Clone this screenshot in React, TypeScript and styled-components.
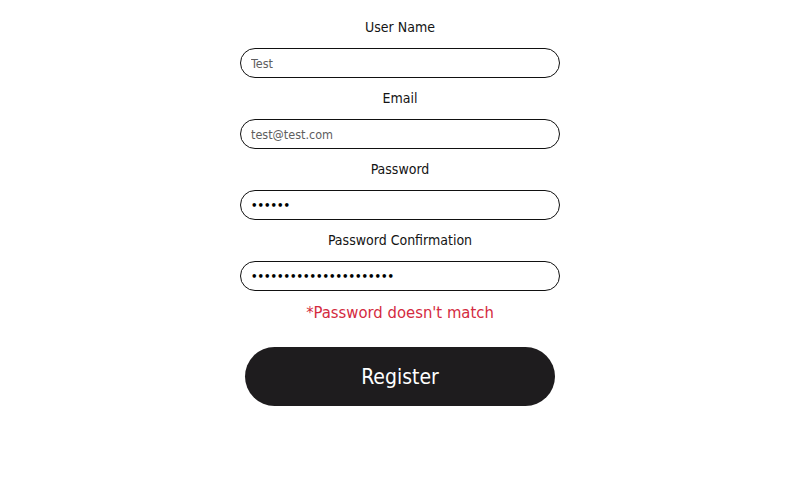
import React from 'react'
import styled, { createGlobalStyle } from 'styled-components'

const GlobalStyle = createGlobalStyle`
  html, body {
    margin: 0;
    padding: 0;
    background: #ffffff;
    font-family: "DejaVu Sans Condensed", "DejaVu Sans", sans-serif;
  }
`

const Page = styled.div`
  width: 100%;
  min-height: 479px;
  display: flex;
  justify-content: center;
  padding: 17px 0 0 4px;
  box-sizing: border-box;
`

const Form = styled.form`
  width: 320px;
  display: flex;
  flex-direction: column;
  align-items: center;
`

const Field = styled.div`
  width: 100%;
  display: flex;
  flex-direction: column;
  align-items: center;
  margin-bottom: 10px;
`

const Label = styled.label`
  font-size: 14px;
  line-height: 20px;
  color: #141414;
  margin-bottom: 11px;
`

const Input = styled.input<{ $secret?: boolean }>`
  width: 100%;
  height: 30px;
  box-sizing: border-box;
  border: 1px solid #111;
  border-radius: 15px;
  padding: 0 10px;
  background: #fff;
  font-family: inherit;
  font-size: ${(p) => (p.$secret ? '11.3px' : '12.5px')};
  font-weight: ${(p) => (p.$secret ? 700 : 400)};
  color: ${(p) => (p.$secret ? '#000' : '#5e5e5e')};
  outline: none;
`

const ErrorText = styled.div`
  font-size: 16.5px;
  line-height: 24px;
  color: #d42a40;
  margin-bottom: 22px;
`

const SubmitButton = styled.button`
  width: 310px;
  height: 59px;
  border: none;
  border-radius: 30px;
  background: #1e1c1e;
  color: #fff;
  font-family: inherit;
  font-size: 21px;
  cursor: pointer;
`

const fields = [
  { label: 'User Name', type: 'text', value: 'Test' },
  { label: 'Email', type: 'email', value: 'test@test.com' },
  { label: 'Password', type: 'password', value: 'secret' },
  { label: 'Password Confirmation', type: 'password', value: 'secretsecretsecretsecr' },
]

export default function App() {
  return (
    <Page>
      <GlobalStyle />
      <Form onSubmit={(e) => e.preventDefault()}>
        {fields.map((f) => (
          <Field key={f.label}>
            <Label>{f.label}</Label>
            <Input type={f.type} value={f.value} readOnly $secret={f.type === 'password'} />
          </Field>
        ))}
        <ErrorText>*Password doesn't match</ErrorText>
        <SubmitButton type="submit">Register</SubmitButton>
      </Form>
    </Page>
  )
}
